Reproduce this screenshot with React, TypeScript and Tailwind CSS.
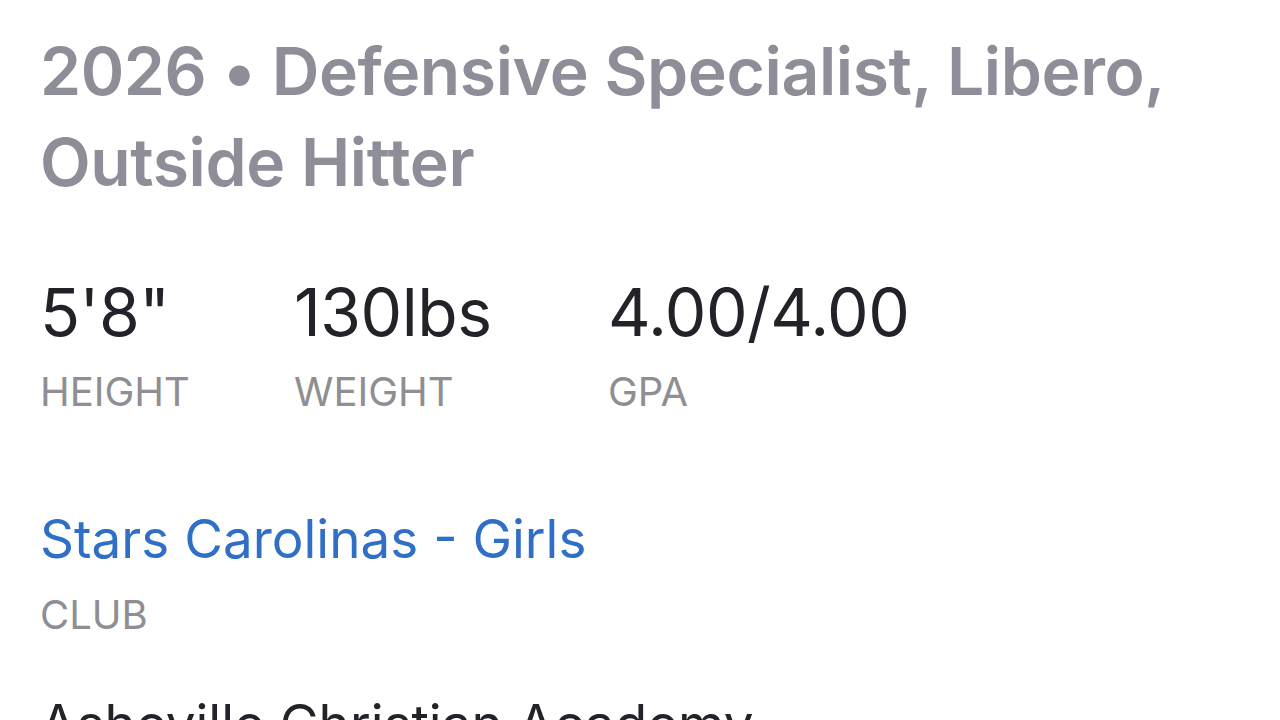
export default function App() {
  const stats = [
    { value: `5'8"`, label: "HEIGHT", w: "w-[254px]" },
    { value: "130lbs", label: "WEIGHT", w: "w-[314px]" },
    { value: "4.00/4.00", label: "GPA", w: "w-auto" },
  ];

  return (
    <div className="w-[1280px] h-[720px] overflow-hidden bg-white font-['Inter',sans-serif] px-10">
      <h1 className="pt-[26px] text-[66px] leading-[91px] font-semibold text-[#8e8e98] tracking-[-0.4px]">
        2026 • Defensive Specialist, Libero, Outside Hitter
      </h1>

      <div className="flex mt-[68px]">
        {stats.map((s) => (
          <div key={s.label} className={s.w}>
            <div className="text-[66px] leading-[72px] text-[#222228] tracking-[-0.5px]">{s.value}</div>
            <div className="mt-[22px] text-[40px] leading-[44px] text-[#8e8e93]">{s.label}</div>
          </div>
        ))}
      </div>

      <div className="mt-[93px]">
        <div className="text-[53px] leading-[64px] text-[#2f6fc6]">Stars Carolinas - Girls</div>
        <div className="mt-[22px] text-[40px] leading-[44px] text-[#8e8e93]">CLUB</div>
      </div>

      <div className="mt-[55px] text-[53px] leading-[64px] text-[#222228]">Asheville Christian Academy</div>
    </div>
  );
}
